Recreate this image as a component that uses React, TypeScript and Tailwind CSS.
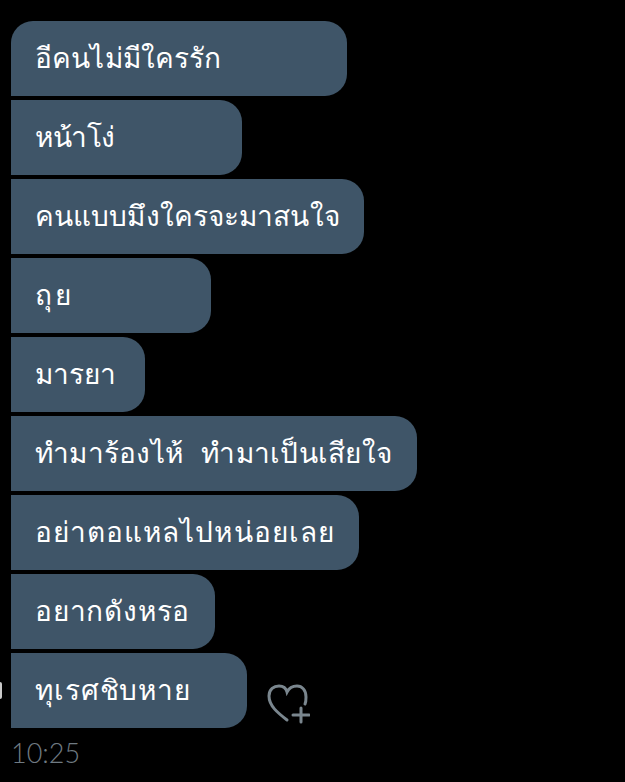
const messages = [
  { text: 'อีคนไม่มีใครรัก', box: 'w-[336px] rounded-tl-[22px] tracking-[0.15px]' },
  { text: 'หน้าโง่', box: 'w-[231px] tracking-[-0.4px]' },
  { text: 'คนแบบมึงใครจะมาสนใจ', box: 'w-[353px] tracking-[0.1px]' },
  { text: 'ถุย', box: 'w-[200px] tracking-[2.5px]' },
  { text: 'มารยา', box: 'w-[134px]' },
  { text: 'ทำมาร้องไห้  ทำมาเป็นเสียใจ', box: 'w-[406px] tracking-[0.25px]' },
  { text: 'อย่าตอแหลไปหน่อยเลย', box: 'w-[348px] tracking-[1.05px]' },
  { text: 'อยากดังหรอ', box: 'w-[204px] tracking-[0.8px]' },
  { text: 'ทุเรศชิบหาย', box: 'w-[236px] tracking-[0.9px]' },
];

export default function App() {
  return (
    <div className="relative h-[782px] w-[625px] overflow-hidden bg-black pl-[11px] pt-[21px] font-['DejaVu_Sans',sans-serif]">
      <div className="flex flex-col gap-1">
        {messages.map((m, i) => (
          <div key={i} className="flex items-end">
            <div className={`${m.box} flex h-[75px] items-center whitespace-pre rounded-r-[22px] bg-[#3f5568] pl-6 text-[28px] text-white`}>
              {m.text}
            </div>
            {i === messages.length - 1 && (
              <svg viewBox="0 0 44 42" className="mb-[3px] ml-[19px] h-[42px] w-[44px]" fill="none" stroke="#7a868e" strokeWidth="3" strokeLinecap="round">
                <path d="M21 37 C12 30 3 23 3 13 C3 6 8 3 13 3 C17 3 20 5 21 9 C23 5 27 3 31 3 C36 3 40 7 40 14 C40 16 40 19 39 21" />
                <path d="M35 25 V39 M27 32 H43" />
              </svg>
            )}
          </div>
        ))}
      </div>
      {/* edge of the avatar cut off by the window */}
      <div className="absolute left-0 top-[682px] h-[17px] w-[2px] rounded-r-full bg-[#c9c9c9]" />
      <div className="mt-[6px] text-[27px] leading-[38px] font-['Lato',sans-serif] font-light text-[#6f7a82]">10:25</div>
    </div>
  );
}
